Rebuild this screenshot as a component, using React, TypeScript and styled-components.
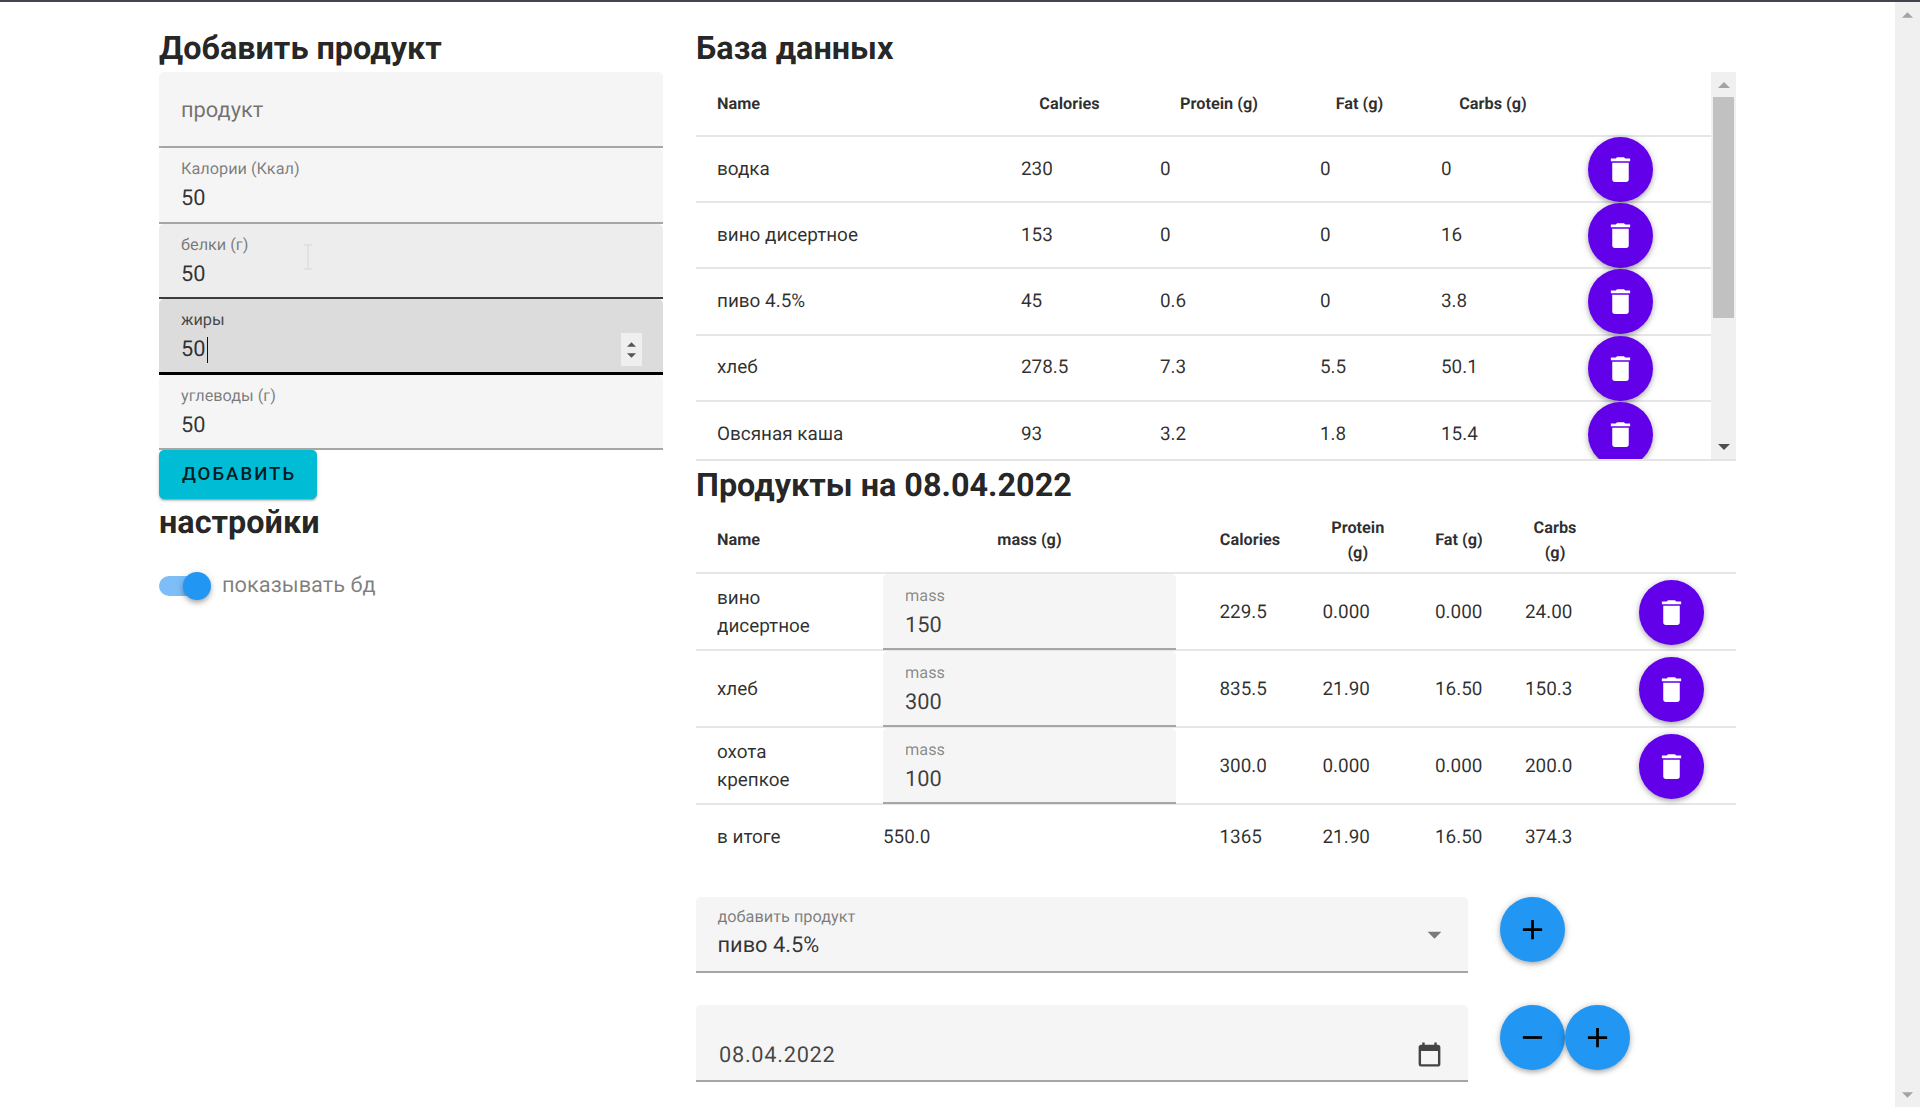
import React from 'react';
import styled, { createGlobalStyle } from 'styled-components';

const Global = createGlobalStyle`
  html, body { margin: 0; padding: 0; height: 100%; overflow: hidden; background: #fff; }
  body { font-family: Roboto, "Noto Sans", "Liberation Sans", sans-serif; color: rgba(0,0,0,.87); text-rendering: geometricPrecision; }
  * { box-sizing: border-box; }
`;

const Screen = styled.div`
  position: relative;
  display: flex;
  flex-direction: column;
  height: 1107px;
  overflow: hidden;
`;
const TopLine = styled.div`
  height: 2px;
  flex: none;
  background: #44444f;
`;
const Body = styled.div`
  flex: 1;
  display: flex;
  min-height: 0;
`;
const Main = styled.main`
  flex: 1;
  display: flex;
  gap: 33px;
  padding: 23px 0 0 159px;
  min-width: 0;
`;
const LeftCol = styled.section`
  width: 504px;
  flex: none;
`;
const RightCol = styled.section`
  width: 1040px;
  flex: none;
`;
const Heading = styled.h2`
  margin: 0;
  height: 47px;
  line-height: 47px;
  font-size: 32.4px;
  font-weight: 700;
  color: rgba(0,0,0,.87);
  white-space: nowrap;
`;

const tones = {
  rest: { bg: '#f5f5f5', line: '#a6a6a6', width: 2, label: 'rgba(0,0,0,.5)' },
  hover: { bg: '#ededed', line: '#3c3c3c', width: 2, label: 'rgba(0,0,0,.5)' },
  focus: { bg: '#dcdcdc', line: '#000', width: 3, label: 'rgba(0,0,0,.7)' },
};
type Tone = keyof typeof tones;

const Field = styled.div<{ $tone?: Tone }>`
  position: relative;
  height: 75.4px;
  padding: 11px 22px 0;
  background: ${p => tones[p.$tone ?? 'rest'].bg};
  border-bottom: ${p => tones[p.$tone ?? 'rest'].width}px solid ${p => tones[p.$tone ?? 'rest'].line};
  border-radius: 5px 5px 0 0;
`;
const PlaceholderField = styled(Field)`
  display: flex;
  align-items: center;
  height: 76.4px;
  padding-top: 2px;
  font-size: 21.8px;
  color: rgba(0,0,0,.55);
`;
const FieldLabel = styled.div<{ $tone?: Tone }>`
  font-size: 16.3px;
  line-height: 20px;
  color: ${p => tones[p.$tone ?? 'rest'].label};
  white-space: nowrap;
`;
const FieldValue = styled.div`
  display: flex;
  align-items: center;
  font-size: 21.8px;
  line-height: 39px;
  color: rgba(0,0,0,.8);
  white-space: nowrap;
`;
const Caret = styled.span`
  width: 1px;
  height: 26px;
  margin-left: 1px;
  background: #111;
`;
const Spinner = styled.div`
  position: absolute;
  right: 21px;
  top: 34px;
  width: 21px;
  height: 33px;
  background: #efefef;
  display: flex;
  flex-direction: column;
  align-items: center;
  justify-content: center;
  gap: 6px;
`;
const AddButton = styled.button`
  display: block;
  width: 158px;
  height: 49px;
  margin: 0;
  padding: 0 0 0 2px;
  border: 0;
  border-radius: 5px;
  background: #00bcd4;
  color: rgba(0,0,0,.87);
  font: 500 18.6px Roboto, sans-serif;
  letter-spacing: 2px;
  text-transform: uppercase;
  box-shadow: 0 3px 1px -2px rgba(0,0,0,.2), 0 2px 2px 0 rgba(0,0,0,.14), 0 1px 5px 0 rgba(0,0,0,.12);
`;
const SwitchRow = styled.div`
  display: flex;
  align-items: center;
  gap: 11px;
  height: 40px;
  margin-top: 20px;
`;
const SwitchTrack = styled.div`
  position: relative;
  width: 40px;
  height: 20px;
  margin-right: 12px;
  border-radius: 10px;
  background: #7dbef8;
`;
const SwitchThumb = styled.div`
  position: absolute;
  right: -12px;
  top: -4px;
  width: 28px;
  height: 28px;
  border-radius: 50%;
  background: #2196f3;
  box-shadow: 0 2px 4px -1px rgba(0,0,0,.2), 0 4px 5px 0 rgba(0,0,0,.14), 0 1px 10px 0 rgba(0,0,0,.12);
`;
const SwitchLabel = styled.span`
  font-size: 21.8px;
  color: rgba(0,0,0,.5);
`;

/* Database table */
const DbFrame = styled.div`
  display: flex;
  height: 389px;
  overflow: hidden;
  border-bottom: 2px solid #e4e4e4;
`;
const DbList = styled.div`
  flex: 1;
  min-width: 0;
`;
const dbCols = '304px 139px 160px 121px 146px 145px';
const productCols = '187px 315.5px 103px 112.5px 90px 102px 130px';
const Row = styled.div<{ $cols: string; $height: number; $plain?: boolean }>`
  display: grid;
  grid-template-columns: ${p => p.$cols};
  align-items: center;
  height: ${p => p.$height}px;
  border-bottom: ${p => (p.$plain ? '0' : '2px solid #e6e6e6')};
`;
const HeadCell = styled.div<{ $left?: boolean }>`
  padding: 1px ${p => (p.$left ? '21px' : '0')} 0;
  text-align: ${p => (p.$left ? 'left' : 'center')};
  font-size: 16.3px;
  font-weight: 700;
  line-height: 24.5px;
  color: rgba(0,0,0,.82);
`;
const MassHead = styled(HeadCell)`
  width: 293px;
`;
const Cell = styled.div<{ $lift?: boolean }>`
  padding-left: 21px;
  padding-bottom: ${p => (p.$lift ? '2px' : '0')};
  font-size: 18.9px;
  line-height: 27.5px;
  color: rgba(0,0,0,.82);
  white-space: nowrap;
`;
const NameCell = styled(Cell)`
  white-space: normal;
  padding-right: 60px;
  padding-bottom: 1px;
  line-height: 28px;
`;
const MassCell = styled.div`
  width: 293px;
  height: 76px;
  padding: 12px 22px 0;
  background: #f5f5f5;
  border-bottom: 2px solid #a6a6a6;
  border-radius: 5px 5px 0 0;
  align-self: start;
`;
const MassLabel = styled.div`
  font-size: 16.3px;
  line-height: 20px;
  color: rgba(0,0,0,.45);
`;
const MassValue = styled.div`
  padding-top: 1px;
  font-size: 21.8px;
  line-height: 38px;
  color: rgba(0,0,0,.75);
`;
const TotalMass = styled(Cell)`
  padding-left: 0;
`;
const FabCell = styled.div<{ $center?: boolean }>`
  display: flex;
  justify-content: ${p => (p.$center ? 'center' : 'flex-start')};
  padding-left: ${p => (p.$center ? '0' : '22px')};
`;
const Fab = styled.button<{ $color: 'purple' | 'blue' }>`
  flex: none;
  display: flex;
  align-items: center;
  justify-content: center;
  width: 65px;
  height: 65px;
  padding: 0;
  border: 0;
  border-radius: 50%;
  background: ${p => (p.$color === 'purple' ? '#6200ea' : '#2196f3')};
  color: ${p => (p.$color === 'purple' ? '#fff' : '#000')};
  box-shadow: 0 3px 5px -1px rgba(0,0,0,.2), 0 1px 6px 0 rgba(0,0,0,.14), 0 1px 10px 0 rgba(0,0,0,.1);
`;

/* Scrollbars */
const ScrollTrack = styled.div<{ $width: number }>`
  flex: none;
  display: flex;
  flex-direction: column;
  align-items: center;
  justify-content: space-between;
  width: ${p => p.$width}px;
  background: #f0f0f0;
`;
const ScrollButton = styled.div<{ $active?: boolean }>`
  flex: none;
  display: flex;
  align-items: center;
  justify-content: center;
  width: 100%;
  height: 25px;
  color: ${p => (p.$active ? '#505050' : '#a3a3a3')};
`;
const ScrollSpace = styled.div`
  flex: 1;
  width: 100%;
  padding: 0 2px;
`;
const ScrollThumb = styled.div`
  height: 221px;
  background: #c1c1c1;
`;

const ProductTitle = styled(Heading)`
  padding-top: 1px;
`;

/* Bottom controls */
const ControlRow = styled.div<{ $top: number }>`
  display: flex;
  align-items: flex-start;
  margin-top: ${p => p.$top}px;
`;
const ControlField = styled.div<{ $height: number }>`
  position: relative;
  width: 772px;
  height: ${p => p.$height}px;
  margin-right: 31.5px;
  padding: 8.5px 21.5px 0;
  background: #f5f5f5;
  border-bottom: 2px solid #a6a6a6;
  border-radius: 5px 5px 0 0;
`;
const SelectLabel = styled.div`
  font-size: 16.3px;
  line-height: 24px;
  color: rgba(0,0,0,.5);
`;
const SelectValue = styled.div`
  font-size: 21.8px;
  line-height: 34px;
  color: rgba(0,0,0,.8);
`;
const SelectArrow = styled.svg`
  position: absolute;
  right: 17px;
  top: 21px;
  width: 33px;
  height: 33px;
  fill: #7a7a7a;
`;
const DateValue = styled.div`
  display: flex;
  align-items: center;
  justify-content: space-between;
  height: 36px;
  margin-top: 22.5px;
  padding-left: 1.5px;
  padding-right: 3px;
  font-size: 21.8px;
  letter-spacing: .7px;
  color: rgba(0,0,0,.72);
`;
const DateText = styled.span`
  padding-top: 2px;
`;
const CursorMark = styled.svg`
  position: absolute;
  left: 302px;
  top: 244px;
  width: 12px;
  height: 26px;
  stroke: #dedede;
  fill: none;
  stroke-width: 1.5;
`;

const Mdi = ({ d, size = 33 }: { d: string; size?: number }) => (
  <svg width={size} height={size} viewBox="0 0 24 24" fill="currentColor" aria-hidden="true">
    <path d={d} />
  </svg>
);
const TRASH = 'M19,4H15.5L14.5,3H9.5L8.5,4H5V6H19M6,19A2,2 0 0,0 8,21H16A2,2 0 0,0 18,19V7H6V19Z';
const PLUS = 'M19,13H13V19H11V13H5V11H11V5H13V11H19V13Z';
const MINUS = 'M19,13H5V11H19V13Z';
const CALENDAR = 'M19 4h-1V2h-2v2H8V2H6v2H5c-1.11 0-2 .9-2 2v14a2 2 0 0 0 2 2h14c1.1 0 2-.9 2-2V6c0-1.1-.9-2-2-2zm0 16H5V9h14v11z';

const Tri = ({ down, w = 14, h = 7 }: { down?: boolean; w?: number; h?: number }) => (
  <svg width={w} height={h} viewBox="0 0 14 7" fill="currentColor" aria-hidden="true">
    <path d={down ? 'M0 0H14L7 7Z' : 'M0 7H14L7 0Z'} />
  </svg>
);

const SpinArrow = styled.span`
  display: flex;
  color: #555;
`;

const dbRows = [
  ['водка', '230', '0', '0', '0'],
  ['вино дисертное', '153', '0', '0', '16'],
  ['пиво 4.5%', '45', '0.6', '0', '3.8'],
  ['хлеб', '278.5', '7.3', '5.5', '50.1'],
  ['Овсяная каша', '93', '3.2', '1.8', '15.4'],
];
const productRows = [
  ['вино дисертное', '150', '229.5', '0.000', '0.000', '24.00'],
  ['хлеб', '300', '835.5', '21.90', '16.50', '150.3'],
  ['охота крепкое', '100', '300.0', '0.000', '0.000', '200.0'],
];

export default function App() {
  return (
    <Screen>
      <Global />
      <TopLine />
      <Body>
        <Main>
          <LeftCol>
            <Heading>Добавить продукт</Heading>
            <PlaceholderField>продукт</PlaceholderField>
            <Field>
              <FieldLabel>Калории (Ккал)</FieldLabel>
              <FieldValue>50</FieldValue>
            </Field>
            <Field $tone="hover">
              <FieldLabel>белки (г)</FieldLabel>
              <FieldValue>50</FieldValue>
            </Field>
            <Field $tone="focus">
              <FieldLabel $tone="focus">жиры</FieldLabel>
              <FieldValue>50<Caret /></FieldValue>
              <Spinner>
                <SpinArrow><Tri w={9} h={5} /></SpinArrow>
                <SpinArrow><Tri down w={9} h={5} /></SpinArrow>
              </Spinner>
            </Field>
            <Field>
              <FieldLabel>углеводы (г)</FieldLabel>
              <FieldValue>50</FieldValue>
            </Field>
            <AddButton>Добавить</AddButton>
            <Heading>настройки</Heading>
            <SwitchRow>
              <SwitchTrack><SwitchThumb /></SwitchTrack>
              <SwitchLabel>показывать бд</SwitchLabel>
            </SwitchRow>
          </LeftCol>
          <RightCol>
            <Heading>База данных</Heading>
            <DbFrame>
              <DbList>
                <Row $cols={dbCols} $height={65}>
                  <HeadCell $left>Name</HeadCell>
                  <HeadCell>Calories</HeadCell>
                  <HeadCell>Protein (g)</HeadCell>
                  <HeadCell>Fat (g)</HeadCell>
                  <HeadCell>Carbs (g)</HeadCell>
                  <div />
                </Row>
                {dbRows.map(r => (
                  <Row key={r[0]} $cols={dbCols} $height={66.2}>
                    {r.map((c, i) => <Cell key={i} $lift>{c}</Cell>)}
                    <FabCell><Fab $color="purple"><Mdi d={TRASH} /></Fab></FabCell>
                  </Row>
                ))}
              </DbList>
              <ScrollTrack $width={25}>
                <ScrollButton><Tri w={12} h={6} /></ScrollButton>
                <ScrollSpace><ScrollThumb /></ScrollSpace>
                <ScrollButton $active><Tri down w={12} h={6} /></ScrollButton>
              </ScrollTrack>
            </DbFrame>
            <ProductTitle>Продукты на 08.04.2022</ProductTitle>
            <Row $cols={productCols} $height={66}>
              <HeadCell $left>Name</HeadCell>
              <MassHead>mass (g)</MassHead>
              <HeadCell>Calories</HeadCell>
              <HeadCell>Protein<br />(g)</HeadCell>
              <HeadCell>Fat (g)</HeadCell>
              <HeadCell>Carbs<br />(g)</HeadCell>
              <div />
            </Row>
            {productRows.map(r => (
              <Row key={r[0]} $cols={productCols} $height={77}>
                <NameCell>{r[0]}</NameCell>
                <MassCell>
                  <MassLabel>mass</MassLabel>
                  <MassValue>{r[1]}</MassValue>
                </MassCell>
                <Cell>{r[2]}</Cell>
                <Cell>{r[3]}</Cell>
                <Cell>{r[4]}</Cell>
                <Cell>{r[5]}</Cell>
                <FabCell $center><Fab $color="purple"><Mdi d={TRASH} /></Fab></FabCell>
              </Row>
            ))}
            <Row $cols={productCols} $height={66} $plain>
              <Cell $lift>в итоге</Cell>
              <TotalMass $lift>550.0</TotalMass>
              <Cell $lift>1365</Cell>
              <Cell $lift>21.90</Cell>
              <Cell $lift>16.50</Cell>
              <Cell $lift>374.3</Cell>
              <div />
            </Row>
            <ControlRow $top={25.5}>
              <ControlField $height={76.5}>
                <SelectLabel>добавить продукт</SelectLabel>
                <SelectValue>пиво 4.5%</SelectValue>
                <SelectArrow viewBox="0 0 24 24"><path d="M7,10L12,15L17,10H7Z" /></SelectArrow>
              </ControlField>
              <Fab $color="blue"><Mdi d={PLUS} /></Fab>
            </ControlRow>
            <ControlRow $top={32}>
              <ControlField $height={76.5}>
                <DateValue>
                  <DateText>08.04.2022</DateText>
                  <Mdi d={CALENDAR} size={29} />
                </DateValue>
              </ControlField>
              <Fab $color="blue"><Mdi d={MINUS} /></Fab>
              <Fab $color="blue"><Mdi d={PLUS} /></Fab>
            </ControlRow>
          </RightCol>
        </Main>
        <ScrollTrack $width={25}>
          <ScrollButton><Tri w={11} h={6} /></ScrollButton>
          <ScrollButton><Tri down w={11} h={6} /></ScrollButton>
        </ScrollTrack>
      </Body>
      <CursorMark viewBox="0 0 12 26"><path d="M2 1h8M6 1v24M2 25h8" /></CursorMark>
    </Screen>
  );
}
